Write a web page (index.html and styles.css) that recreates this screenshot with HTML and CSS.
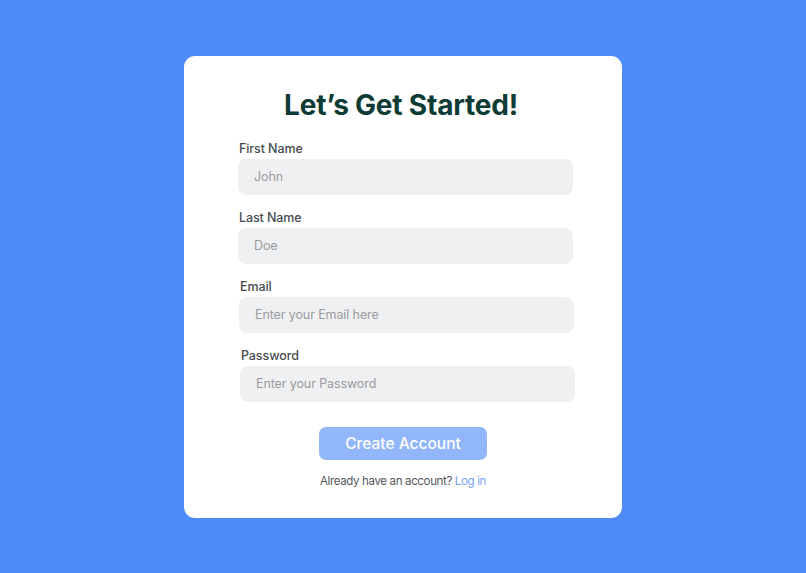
FILE: index.html
```html
<!DOCTYPE html>
<html lang="en">
<head>
<meta charset="utf-8">
<title>Sign Up</title>
<link rel="stylesheet" href="styles.css">
</head>
<body>
<main class="card">
  <h1 class="title">Let’s Get Started!</h1>
  <form class="form">
    <div class="field">
      <label class="label" for="first">First Name</label>
      <input class="input" id="first" type="text" placeholder="John">
    </div>
    <div class="field">
      <label class="label" for="last">Last Name</label>
      <input class="input" id="last" type="text" placeholder="Doe">
    </div>
    <div class="field field--s1">
      <label class="label" for="email">Email</label>
      <input class="input" id="email" type="email" placeholder="Enter your Email here">
    </div>
    <div class="field field--s2">
      <label class="label" for="pass">Password</label>
      <input class="input" id="pass" type="password" placeholder="Enter your Password">
    </div>
    <div class="actions">
      <button class="btn" type="button">Create Account</button>
      <p class="footer">Already have an account? <a class="link" href="#">Log in</a></p>
    </div>
  </form>
</main>
</body>
</html>
```

FILE: styles.css
```css
* { box-sizing: border-box; }
html, body { margin: 0; padding: 0; }
body {
  background: #4f8af9;
  min-height: 100vh;
  display: flex;
  align-items: center;
  justify-content: center;
  font-family: Inter, "Open Sans", sans-serif;
}
.card {
  width: 438px;
  height: 462px;
  background: #ffffff;
  border-radius: 11px;
  padding: 29px 49px 0 54px;
}
.title {
  margin: 0 -45px 0 -54px;
  text-align: center;
  font-size: 28px;
  font-weight: 700;
  color: #0d3b36;
  line-height: 40px;
  letter-spacing: -0.2px;
}
.form {
  margin-top: 11px;
  display: flex;
  flex-direction: column;
  gap: 10px;
}
.field {
  display: flex;
  flex-direction: column;
  gap: 3px;
}
.field--s1 { margin-left: 1px; margin-right: -1px; }
.field--s2 { margin-left: 2px; margin-right: -2px; }
.label {
  font-size: 12.5px;
  line-height: 14px;
  padding-top: 6px;
  font-weight: 500;
  color: #474b4f;
  padding-left: 1px;
  letter-spacing: -0.1px;
}
.input {
  height: 36px;
  border: none;
  outline: none;
  background: #eff0f2;
  border-radius: 8px;
  padding: 0 16px;
  font-family: inherit;
  font-size: 12.5px;
  letter-spacing: -0.1px;
  color: #333;
}
.input::placeholder { color: #9a9b9e; }
.actions {
  display: flex;
  flex-direction: column;
  align-items: center;
  margin: 15px -49px 0 -54px;
}
.btn {
  width: 168px;
  height: 33px;
  border: none;
  border-radius: 7px;
  background: #91b6fa;
  color: #ffffff;
  font-family: inherit;
  font-size: 15.5px;
  font-weight: 500;
  cursor: pointer;
}
.footer {
  margin: 14px 0 0;
  font-size: 11.5px;
  letter-spacing: -0.35px;
  color: #53575b;
}
.link {
  color: #76a4f5;
  text-decoration: none;
}
```
